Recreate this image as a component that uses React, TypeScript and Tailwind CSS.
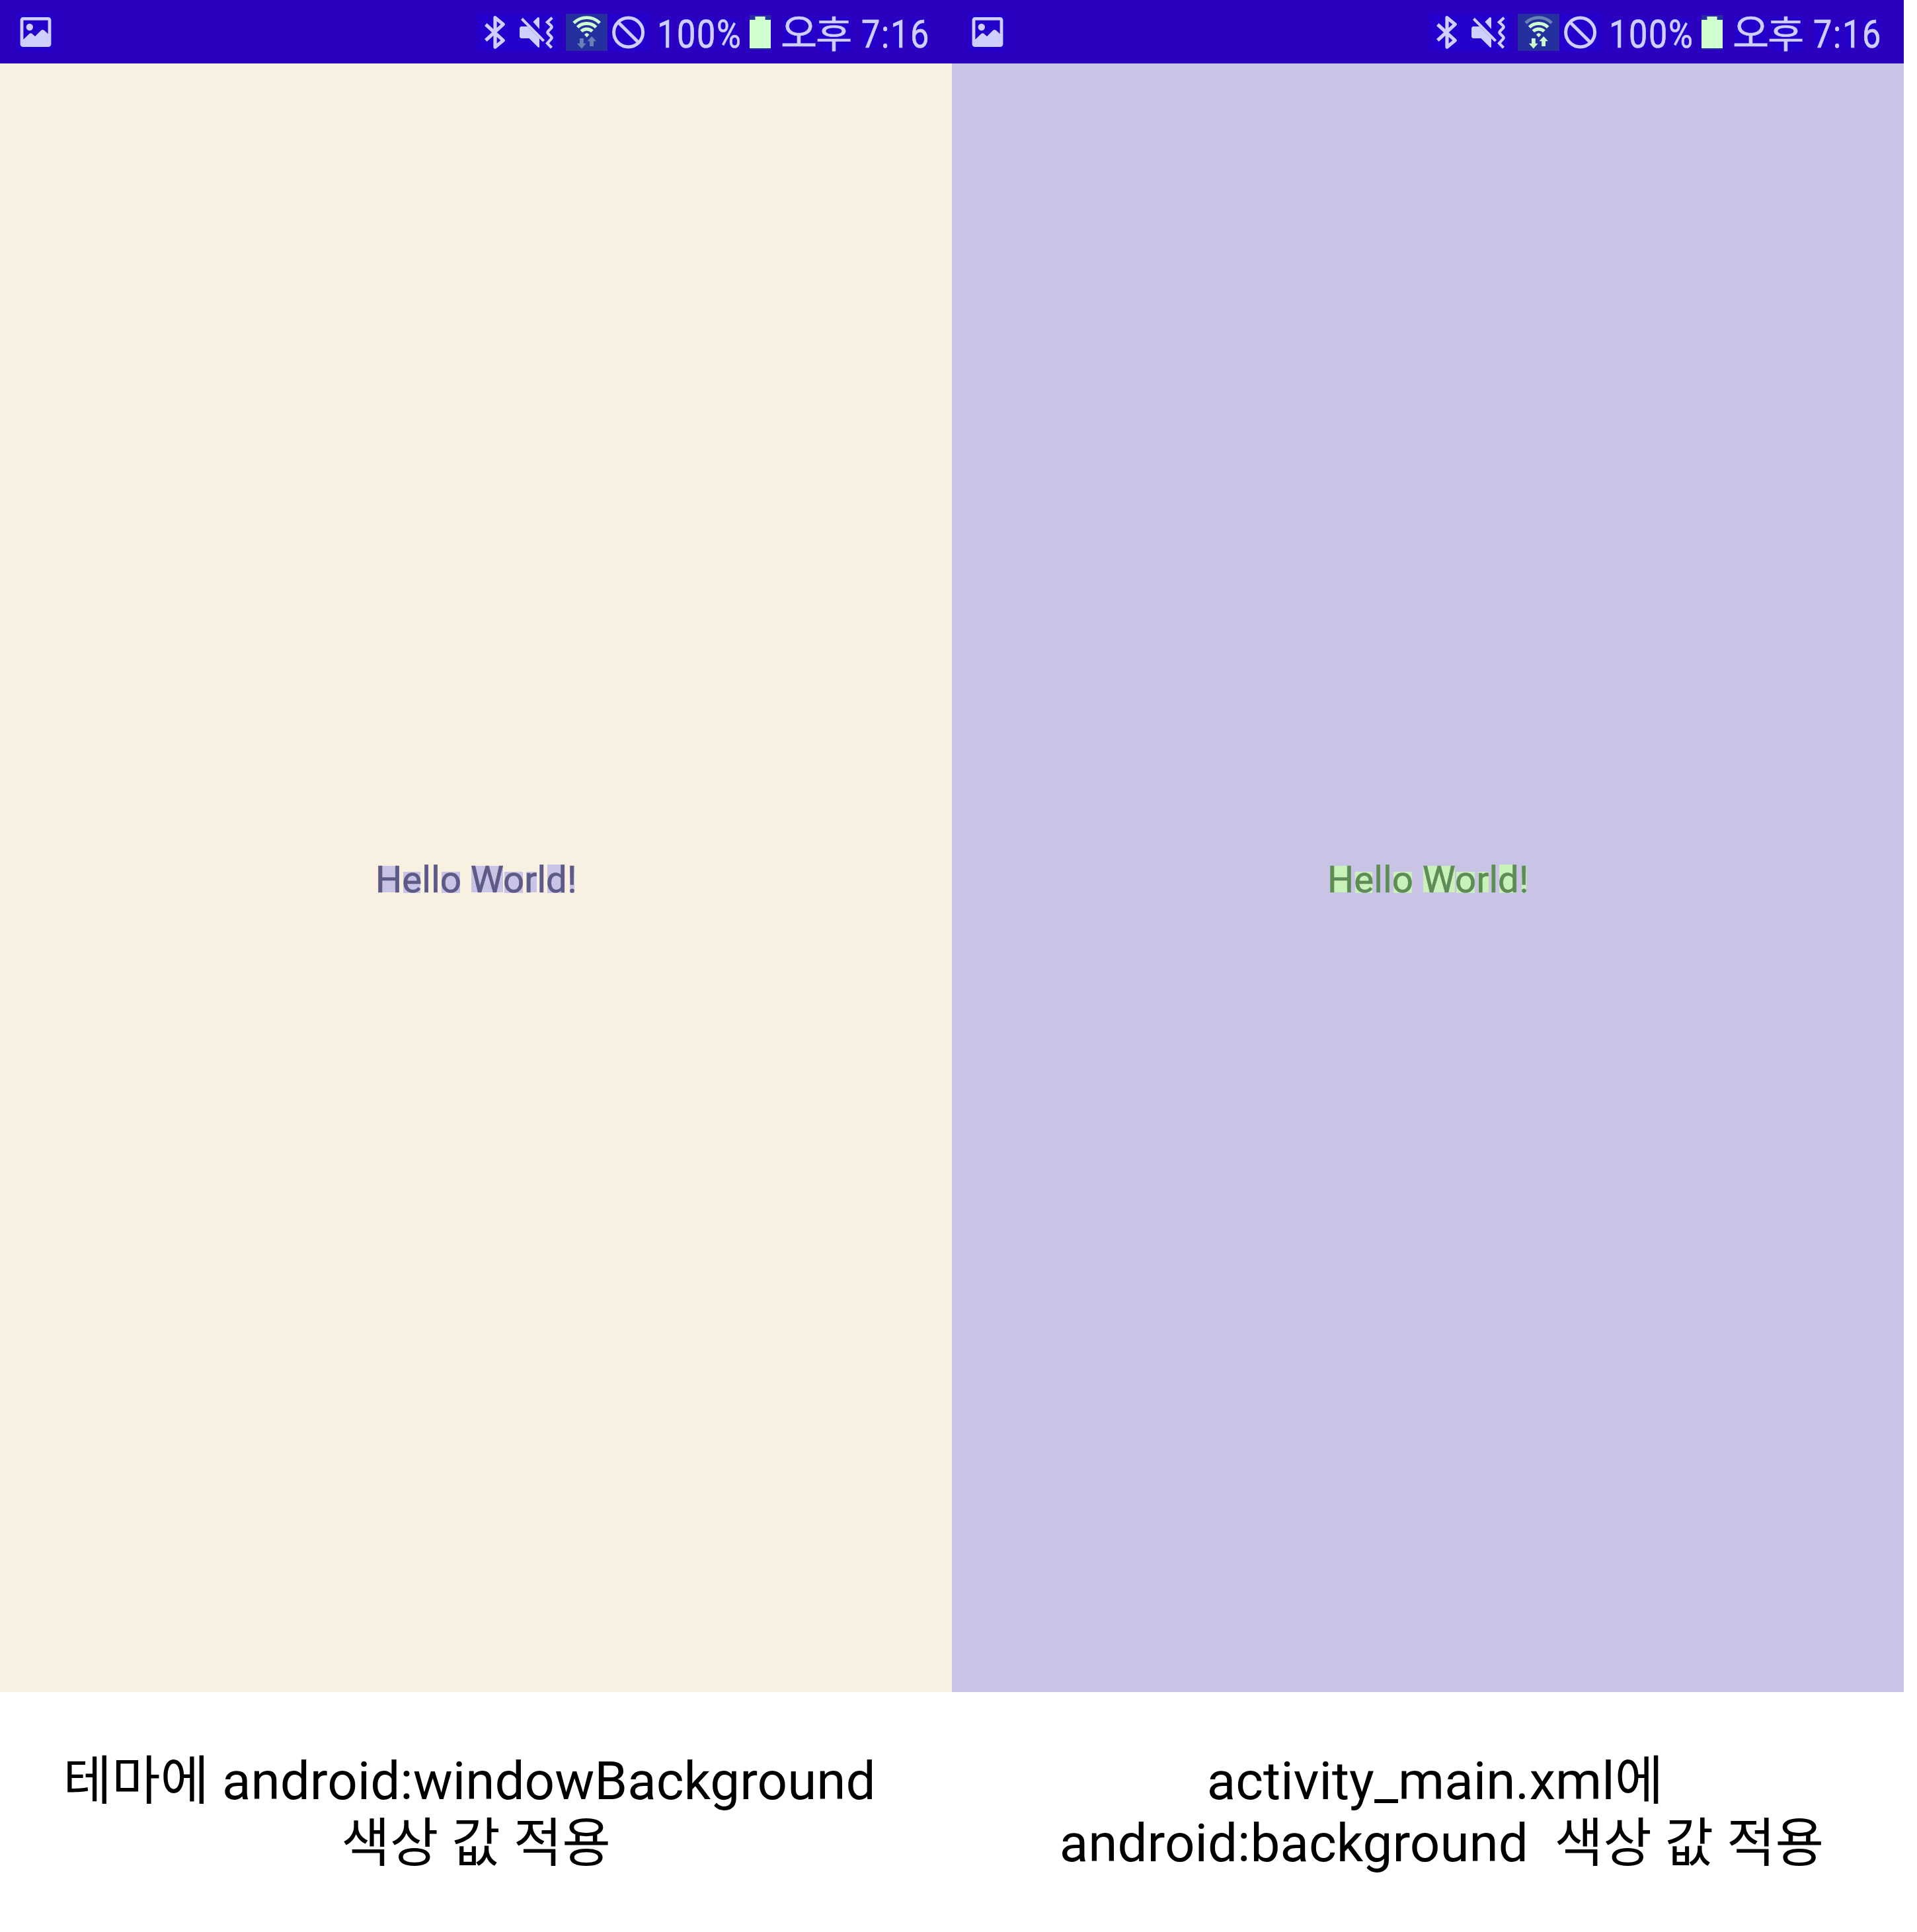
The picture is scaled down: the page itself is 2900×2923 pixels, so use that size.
type Box = [x: number, y: number, w: number, h: number];

function ImageIcon() {
  return (
    <svg className="block h-14 w-[55px] shrink-0" viewBox="26 21 55 56">
      <rect x="26" y="21" width="55" height="56" fill="#2300cb" />
      <rect x="33" y="28.3" width="42" height="40.4" rx="2" fill="none" stroke="#cfcfff" strokeWidth="4.8" />
      <circle cx="44.8" cy="41" r="5.2" fill="#cfcfff" />
      <path d="M35 60 L44.5 51 Q46.5 49.6 48.5 51 L53 55 L62 46 Q64.5 44 67 46 L74 52.5 V69 H34 Z" fill="#cfcfff" />
    </svg>
  );
}

function BluetoothMuteIcons() {
  return (
    <svg className="block h-14 w-[124px] shrink-0" viewBox="722 21 124 56">
      <rect x="722" y="21" width="124" height="56" fill="#2300cb" />
      <path
        d="M734.8 37 L761.2 61.2 L749 71.3 V26.7 L761.2 36.8 L734.8 61"
        fill="none"
        stroke="#cfcfff"
        strokeWidth="5.2"
        strokeLinejoin="round"
      />
      <path d="M788.5 40 H798 L816 58 V71 Q816 72 814.5 72 L800.5 58 H788.5 Q786 57.5 786 55 V43 Q786 40.5 788.5 40 Z" fill="#cfcfff" />
      <path d="M790.8 26.7 L824 60.5 L821.2 63.5 L788 30 Z" fill="#cfcfff" />
      <path d="M806.3 33 L813.5 26.3 Q816 25.5 816 28 V44 Z" fill="#cfcfff" />
      <path
        d="M835.3 26.8 L828 33.6 L834 39.3 Q835.3 40.8 834 42.3 L829 47.5 Q827.8 49 829 50.5 L834 55.7 Q835.3 57.2 834 58.7 L828 65.4 L834.5 72.2"
        fill="none"
        stroke="#cfcfff"
        strokeWidth="4.3"
      />
    </svg>
  );
}

function WifiIcon({ outer, arrows }: { outer: string; arrows: string }) {
  return (
    <svg className="block h-14 w-[63px] shrink-0" viewBox="856 21 63 56">
      <rect x="856" y="21" width="63" height="56" fill="#252f9e" />
      <path d="M868 34.7 A28 28 0 0 1 907.3 34.7" fill="none" stroke={outer} strokeWidth="4.8" />
      <g fill="none" stroke="#d0ffcf" strokeWidth="5">
        <path d="M873.6 41.2 A20.4 20.4 0 0 1 901.7 41.2" />
        <path d="M879.3 47.3 A12 12 0 0 1 896 47.3" />
      </g>
      <path d="M884 52.6 Q887.7 47.6 891.4 52.6 L887.7 56.4 Z" fill="#d0ffcf" />
      <path d="M877 58 H882.8 V65.8 H886.7 L879.8 73.4 L872.9 65.8 H877 Z" fill={arrows} />
      <path d="M895.2 55 L901.9 62.2 H898 V70 H892.2 V62.2 H888.5 Z" fill={arrows} />
    </svg>
  );
}

function BlockedIcon() {
  return (
    <svg className="block h-14 w-[62px] shrink-0" viewBox="920 21 62 56">
      <rect x="920" y="21" width="62" height="56" fill="#2300cb" />
      <g fill="none" stroke="#cfcfff" strokeWidth="5">
        <circle cx="950.6" cy="49" r="22" />
        <path d="M935.5 33.9 L965.7 64.1" />
      </g>
    </svg>
  );
}

function BatteryIcon() {
  return (
    <svg className="block h-14 w-8 shrink-0" viewBox="1134 21 32 56">
      <rect x="1134" y="23" width="32" height="52" fill="#252f9e" />
      <path d="M1134 30 H1142.4 V25 H1157.6 V30 H1166 V73 H1134 Z" fill="#d0ffcf" />
    </svg>
  );
}

function GlyphBoxes({ boxes, className }: { boxes: Box[]; className: string }) {
  return (
    <>
      {boxes.map(([x, y, w, h]) => (
        <span key={x} className={`absolute ${className}`} style={{ left: x, top: y, width: w, height: h }} />
      ))}
    </>
  );
}

function StatusBar({ outer, arrows }: { outer: string; arrows: string }) {
  return (
    <div className="flex h-24 w-full bg-[#2c00bf] pt-[21px] pl-[26px] text-[60px] leading-[70px] text-[#cfcfff]">
      <ImageIcon />
      <div className="ml-[641px] flex">
        <BluetoothMuteIcons />
        <div className="ml-2.5 flex gap-px">
          <WifiIcon outer={outer} arrows={arrows} />
          <BlockedIcon />
        </div>
        <div className="relative ml-[11px] h-14 w-[141px]">
          <GlyphBoxes className="bg-[#2300cb]" boxes={[[5, 7, 15, 45], [34, 7, 24, 45], [64, 7, 24, 45], [94, 7, 27, 45]]} />
          <span className="relative -top-[4.5px] left-px block origin-left scale-x-[0.84] tracking-[2px] whitespace-nowrap [-webkit-text-stroke:0.7px]">100%</span>
        </div>
        <BatteryIcon />
        <div className="relative ml-4 h-14 w-[115px]">
          <GlyphBoxes className="bg-[#2300cb]" boxes={[[2, 5, 49, 45], [55, 5, 49, 51]]} />
          <span className="relative -top-1 -left-px flex whitespace-nowrap [-webkit-text-stroke:0.6px]">
            <span className="w-[53px]">오</span>
            <span className="block origin-[0_59px] scale-y-[0.935]">후</span>
          </span>
        </div>
        <div className="relative h-14 w-[120px]">
          <GlyphBoxes className="bg-[#2300cb]" boxes={[[7, 8, 25, 44], [39, 19, 8, 33], [53, 8, 15, 44], [82, 8, 24, 44]]} />
          <span className="relative -top-1 left-[5.6px] block origin-left scale-x-[0.84] tracking-[2px] whitespace-nowrap [-webkit-text-stroke:0.7px]">7:16</span>
        </div>
      </div>
    </div>
  );
}

const helloBoxes: Box[] = [
  [22, 10, 32, 40],
  [60, 19, 26, 32],
  [92, 8, 6, 42],
  [106, 8, 6, 42],
  [118, 19, 28, 32],
  [163, 10, 48, 40],
  [213, 19, 28, 32],
  [246, 19, 16, 31],
  [266, 8, 6, 42],
  [278, 8, 26, 43],
  [312, 10, 7, 41],
];

function Hello({ color, box }: { color: string; box: string }) {
  return (
    <div className={`relative mt-[1204px] ml-[550px] h-[66px] w-[340px] text-[56px] leading-[66px] ${color}`}>
      <GlyphBoxes boxes={helloBoxes} className={box} />
      <span className="relative -top-0.5 left-[17.7px] block origin-left scale-x-[1.008] whitespace-nowrap [-webkit-text-stroke:0.6px]">Hello World!</span>
    </div>
  );
}

export default function App() {
  return (
    <div className="h-[2923px] w-[2900px] overflow-hidden bg-white font-['Roboto','Noto_Sans_CJK_KR',sans-serif]">
      <div className="flex">
        <section className="w-[1440px]">
          <div className="h-[2560px] bg-[#f8f0e0]">
            <div className="flex flex-col">
              <StatusBar outer="#d0ffcf" arrows="#6782b5" />
              <Hello color="text-[#5e5a86]" box="bg-[#c9c3e6]" />
            </div>
          </div>
          <div className="pt-[88px] text-center text-[80px] leading-[94px] whitespace-pre text-black">
            <p className="pr-5">테마에 android:windowBackground</p>
            <p>색상 값 적용</p>
          </div>
        </section>
        <section className="w-[1440px]">
          <div className="h-[2560px] bg-[#c9c3e6]">
            <div className="flex flex-col">
              <StatusBar outer="#6782b5" arrows="#d0ffcf" />
              <Hello color="text-[#5e8c58]" box="bg-[#c9f2b9]" />
            </div>
          </div>
          <div className="pt-[88px] pl-[42px] text-center text-[80px] leading-[94px] whitespace-pre text-black">
            <p className="pr-5">activity_main.xml에</p>
            <p>android:background  색상 값 적용</p>
          </div>
        </section>
      </div>
    </div>
  );
}
